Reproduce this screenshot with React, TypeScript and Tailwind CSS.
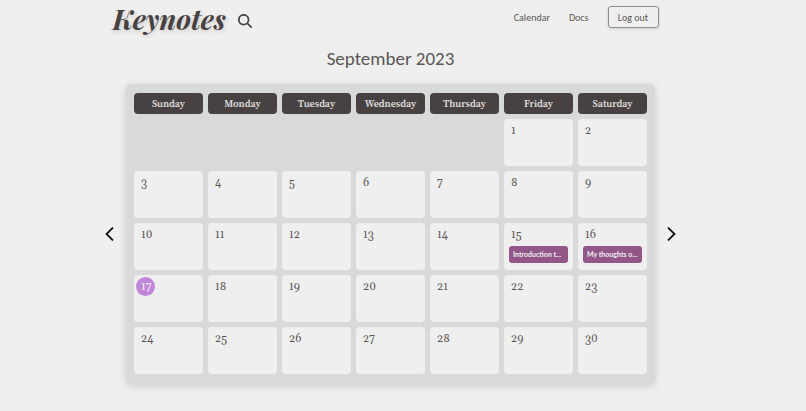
import { FaMagnifyingGlass } from "react-icons/fa6";

type Note = { day: number; title: string };

const WEEKDAYS = [
  "Sunday",
  "Monday",
  "Tuesday",
  "Wednesday",
  "Thursday",
  "Friday",
  "Saturday",
];
const FIRST_WEEKDAY = 5;
const DAYS_IN_MONTH = 30;
const TODAY = 17;

const NOTES: Note[] = [
  { day: 15, title: "Introduction t..." },
  { day: 16, title: "My thoughts o..." },
];

// Rows of seven, padded with null before the first of the month.
function buildWeeks(): (number | null)[][] {
  const cells: (number | null)[] = Array(FIRST_WEEKDAY).fill(null);
  for (let d = 1; d <= DAYS_IN_MONTH; d++) cells.push(d);
  const weeks: (number | null)[][] = [];
  for (let i = 0; i < cells.length; i += 7) weeks.push(cells.slice(i, i + 7));
  return weeks;
}

function Header() {
  return (
    <header className="mx-auto flex w-full max-w-[548px] items-start justify-between">
      <div className="flex items-center gap-3 pl-0.5">
        <a
          href="#"
          className="font-['Playfair_Display','Liberation_Serif',serif] text-[28px] leading-[38px] font-bold italic text-[#484141] [text-shadow:1px_2px_4px_rgba(0,0,0,0.15)]"
        >
          Keynotes
        </a>
        <button type="button" aria-label="Search" className="pt-1 text-[#484141]">
          <FaMagnifyingGlass className="size-3.5" />
        </button>
      </div>
      <nav className="flex items-center gap-[19px] pt-1.5 font-['Carlito','Lato',sans-serif] text-[10px]">
        <a href="#">Calendar</a>
        <a href="#">Docs</a>
        <button
          type="button"
          className="h-[22px] w-[51px] rounded-[3px] border border-[#8f8b8b] shadow-[0_1px_3px_rgba(0,0,0,0.15)]"
        >
          Log out
        </button>
      </nav>
    </header>
  );
}

function Arrow({ label, path }: { label: string; path: string }) {
  return (
    <button type="button" aria-label={label} className="shrink-0 text-[#161414]">
      <svg viewBox="0 0 9 14" className="h-3.5 w-[9px]" fill="none" stroke="currentColor" strokeWidth="1.8">
        <path d={path} />
      </svg>
    </button>
  );
}

function DayCell({ day }: { day: number | null }) {
  if (day === null) return <td className="h-[47px]" />;
  const notes = NOTES.filter((n) => n.day === day);
  return (
    <td className="h-[47px] rounded bg-[#efefef] p-0 align-top">
      <div className="px-0.5 pt-0.5">
        <span
          className={`flex size-[19px] items-center rounded-full pt-0.5 pl-[5px] font-['Gelasio','Georgia','Liberation_Serif',serif] text-[11px] ${
            day === TODAY ? "bg-[#c086d8] text-[#efefef]" : ""
          }`}
        >
          {day}
        </span>
        {notes.map((n) => (
          <a
            key={n.title}
            href="#"
            className="mx-[3px] mt-0.5 block h-[17px] overflow-hidden rounded-[3px] bg-[#925689] px-1 text-[7px] leading-[17px] font-bold whitespace-nowrap text-[#efefef]"
          >
            {n.title}
          </a>
        ))}
      </div>
    </td>
  );
}

export default function App() {
  return (
    <div className="min-h-screen bg-[#efefef] pr-[25px] pb-6 font-['Lato',sans-serif] text-[#5a5656]">
      <div className="pr-3">
        <Header />
      </div>
      <main>
        <h1 className="mt-1.5 text-center font-['Carlito','Lato',sans-serif] text-[19px] leading-[30px]">
          September 2023
        </h1>
        <div className="mt-2.5 flex items-center justify-center gap-3">
          <Arrow label="Previous month" path="M8 .5 1.5 7 8 13.5" />
          <div className="w-full max-w-[529px] rounded-[5px] bg-[#d9d9d9] px-[3px] pt-1 pb-[5px] shadow-[0_2px_8px_rgba(0,0,0,0.15)]">
            <table className="w-full table-fixed border-separate border-spacing-[5px]">
              <thead>
                <tr>
                  {WEEKDAYS.map((name) => (
                    <th
                      key={name}
                      scope="col"
                      className="h-[21px] rounded bg-[#484141] p-0 text-center font-['Source_Serif_4','Source_Serif_Pro','Liberation_Serif',serif] text-[10px] leading-4 font-semibold text-[#e2e0e0]"
                    >
                      {name}
                    </th>
                  ))}
                </tr>
              </thead>
              <tbody>
                {buildWeeks().map((week, i) => (
                  <tr key={i}>
                    {week.map((day, j) => (
                      <DayCell key={j} day={day} />
                    ))}
                  </tr>
                ))}
              </tbody>
            </table>
          </div>
          <Arrow label="Next month" path="M1 .5 7.5 7 1 13.5" />
        </div>
      </main>
    </div>
  );
}
